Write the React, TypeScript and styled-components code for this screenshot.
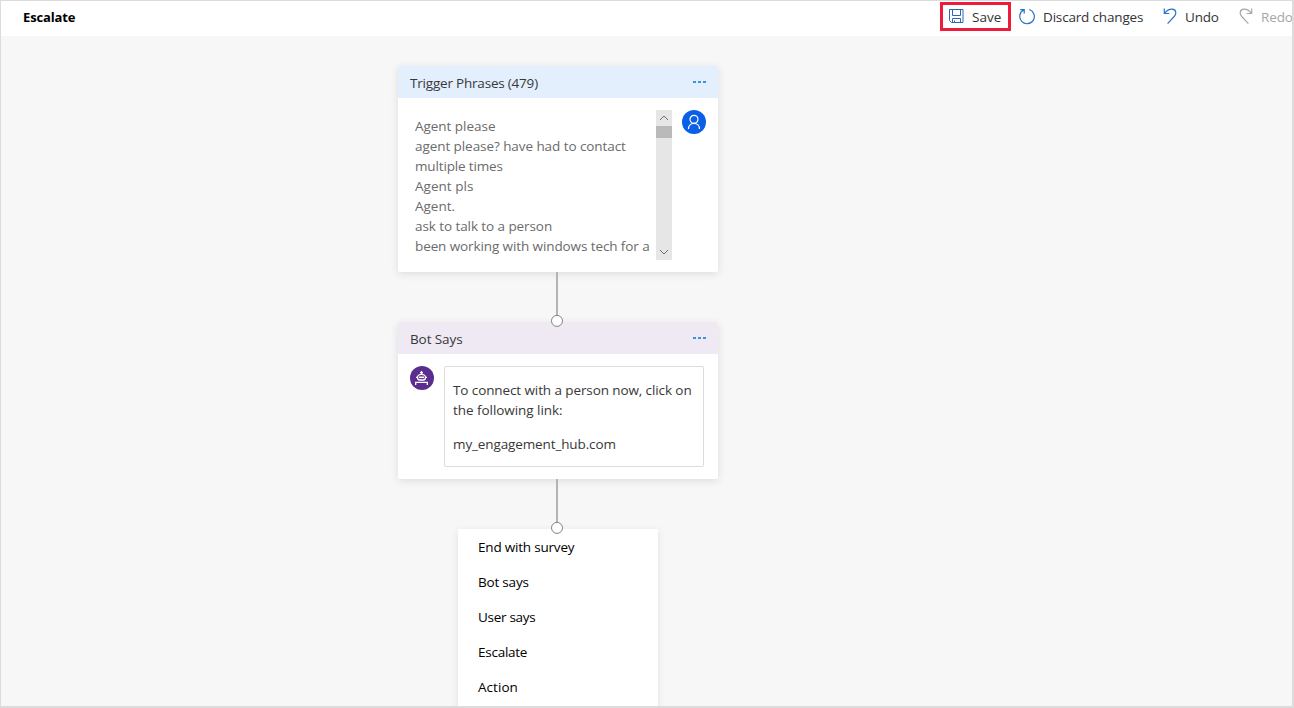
import React from "react";
import styled, { createGlobalStyle } from "styled-components";

const GlobalStyle = createGlobalStyle`
  * { box-sizing: border-box; }
  body { margin: 0; overflow: hidden; font-family: "Open Sans", "Noto Sans", sans-serif; font-size: 13.5px; }
  p, h1, h2, ul { margin: 0; padding: 0; font-weight: 400; font-size: inherit; }
`;

const Frame = styled.div`
  width: 1294px;
  height: 708px;
  display: flex;
  flex-direction: column;
  overflow: hidden;
  background: #f7f7f7;
  border: 1px solid #dcdcdc;
  border-right-width: 2px;
  border-bottom-width: 2px;
`;

const Toolbar = styled.header`
  flex: none;
  height: 35px;
  display: flex;
  align-items: flex-start;
  background: #fff;
  overflow: hidden;
`;

const Title = styled.h1<{ $spacing: number }>`
  && { font-weight: 700; font-size: 13px; }
  flex: none;
  line-height: 20px;
  width: 916px;
  padding: 6px 0 0 22px;
  color: #000;
  letter-spacing: ${(p) => p.$spacing}px;
`;

const Commands = styled.div`
  display: flex;
  flex: none;
  padding-top: 1px;
  margin-left: 23px;
`;

const Command = styled.button<{ $width: number; $highlight?: boolean; $disabled?: boolean; $pad: number; $gap: number; $spacing?: number }>`
  flex: none;
  width: ${(p) => p.$width}px;
  height: 29px;
  padding: 0 0 0 ${(p) => p.$pad}px;
  display: flex;
  align-items: center;
  gap: ${(p) => p.$gap}px;
  background: none;
  border: 3px solid ${(p) => (p.$highlight ? "#ee1c3a" : "transparent")};
  color: ${(p) => (p.$disabled ? "#a6a6a6" : "#333")};
  font: inherit;
  line-height: 20px;
  white-space: nowrap;
  letter-spacing: ${(p) => p.$spacing ?? 0}px;
  svg { flex: none; margin-top: ${(p) => (p.$highlight ? -2 : -1)}px; }
`;

const Flow = styled.main`
  flex: 1;
  min-height: 0;
  width: 320px;
  margin-left: 397px;
  padding-top: 30px;
  display: flex;
  flex-direction: column;
  align-items: center;
`;

const Card = styled.section`
  flex: none;
  width: 320px;
  background: #fff;
  border-radius: 2px;
  box-shadow: 0 2px 8px rgba(0, 0, 0, 0.11);
`;

const CardHeader = styled.div<{ $tint: string }>`
  height: 32px;
  padding: 0 12px;
  display: flex;
  align-items: center;
  justify-content: space-between;
  line-height: 20px;
  border-radius: 2px 2px 0 0;
  background: ${(p) => p.$tint};
  color: #383838;
  padding-top: 1px;
`;

const CardTitle = styled.h2<{ $spacing: number }>`
  letter-spacing: ${(p) => p.$spacing}px;
`;

const Dots = styled.span`
  display: flex;
  gap: 2px;
  margin-top: -1px;
  i { width: 3px; height: 2px; background: #3c93dc; }
`;

const TriggerBody = styled.div`
  height: 174px;
  padding: 12px 12px 12px 17px;
  display: flex;
`;

const Phrases = styled.ul`
  flex: none;
  width: 241px;
  padding-top: 6px;
  list-style: none;
  white-space: nowrap;
  color: #6b6b6b;
`;

const Line = styled.li<{ $spacing?: number }>`
  line-height: 20px;
  letter-spacing: ${(p) => p.$spacing ?? 0}px;
`;

const Scrollbar = styled.div`
  flex: none;
  width: 16px;
  height: 150px;
  display: flex;
  flex-direction: column;
  justify-content: space-between;
  background: #e6e6e6;
  margin-right: 10px;
  svg { display: block; }
`;

const Thumb = styled.div`
  height: 12px;
  background: #bababa;
`;

const Avatar = styled.div<{ $color: string }>`
  flex: none;
  width: 24px;
  height: 24px;
  border-radius: 50%;
  background: ${(p) => p.$color};
  svg { display: block; }
`;

const BotBody = styled.div`
  height: 125px;
  padding: 12px;
  display: flex;
  gap: 10px;
`;

const Message = styled.div`
  width: 260px;
  height: 101px;
  padding: 13px 0 0 8px;
  border: 1px solid #dcdcdc;
  border-radius: 2px;
  color: #383838;
  white-space: nowrap;
`;

const MessageLine = styled.p<{ $spacing?: number; $gap?: boolean }>`
  line-height: 20px;
  letter-spacing: ${(p) => p.$spacing ?? 0}px;
  && { margin-top: ${(p) => (p.$gap ? 14 : 0)}px; }
`;

const Connector = styled.div<{ $height: number }>`
  position: relative;
  flex: none;
  width: 2px;
  height: ${(p) => p.$height}px;
  margin-right: 2px;
  background: #b4b4b4;
  &::after {
    content: "";
    position: absolute;
    z-index: 1;
    left: -4px;
    bottom: -4px;
    width: 10px;
    height: 10px;
    border: 1px solid #858585;
    border-radius: 50%;
    background: #fff;
    transform: translate(-1px, 0.9px);
  }
`;

const Menu = styled.ul`
  flex: none;
  width: 200px;
  height: 200px;
  list-style: none;
  background: #fff;
  box-shadow: 0 2px 8px rgba(0, 0, 0, 0.09);
`;

const MenuItem = styled.li<{ $spacing?: number }>`
  height: 35px;
  line-height: 36px;
  padding-left: 20px;
  color: #000;
  letter-spacing: ${(p) => p.$spacing ?? 0}px;
`;

const SaveIcon = () => (
  <svg width="15" height="14" viewBox="0 0 15 14" fill="none" stroke="#2868b4">
    <path d="M.5.5h13.500v13H2.500l-2-2zM3.500.5v6h8v-6M3.500 13.500V9.500h8v4M5.500 11.500v2" />
  </svg>
);

const DiscardIcon = () => (
  <svg width="16" height="17" viewBox="0 0 16 17" fill="none" stroke="#2474c6" strokeWidth="1.2">
    <path d="M10.3 1.500A7.300 7.300 0 1 1 4.600 2M1.200 1.600h4v4" />
  </svg>
);

const UndoIcon = ({ color, flip }: { color: string; flip?: boolean }) => (
  <svg width="14" height="17" viewBox="0 0 14 17" fill="none" stroke={color} strokeWidth="1.2">
    <path transform={flip ? "translate(14 0) scale(-1 1)" : undefined} d="M1.3.5v5h5M1.5 5.3C4 2.2 6.3 1.2 8.8 1.2c2.4 0 4 1.7 4 3.8 0 1.4-.6 2.5-1.6 3.5L4.6 15.6" />
  </svg>
);

const Dotted = () => (
  <Dots><i /><i /><i /></Dots>
);

const phrases: [string, number][] = [
  ["Agent please", -0.03],
  ["agent please? have had to contact", -0.07],
  ["multiple times", -0.15],
  ["Agent pls", 0.03],
  ["Agent.", 0],
  ["ask to talk to a person", -0.08],
  ["been working with windows tech for a", -0.1],
];

const menuItems: [string, number][] = [
  ["End with survey", -0.2],
  ["Bot says", -0.2],
  ["User says", -0.3],
  ["Escalate", -0.25],
  ["Action", 0.05],
];

export default function App() {
  return (
    <>
      <GlobalStyle />
      <Frame>
        <Toolbar>
          <Title $spacing={-0.15}>Escalate</Title>
          <Commands>
            <Command $width={71} $pad={6} $gap={8} $highlight><SaveIcon />Save</Command>
            <Command $width={144} $pad={5} $gap={8} $spacing={-0.17}><DiscardIcon />Discard changes</Command>
            <Command $width={76} $pad={5} $gap={8} $spacing={-0.2}><UndoIcon color="#2474c6" />Undo</Command>
            <Command $width={76} $pad={5} $gap={8} $spacing={-0.1} $disabled><UndoIcon color="#a6a6a6" flip />Redo</Command>
          </Commands>
        </Toolbar>
        <Flow>
          <Card>
            <CardHeader $tint="#e3effd">
              <CardTitle $spacing={-0.2}>Trigger Phrases (479)</CardTitle>
              <Dotted />
            </CardHeader>
            <TriggerBody>
              <Phrases>
                {phrases.map(([text, spacing]) => <Line key={text} $spacing={spacing}>{text}</Line>)}
              </Phrases>
              <Scrollbar>
                <div>
                  <svg width="16" height="16" fill="none" stroke="#707070"><path d="M4 10l4-4 4 4" /></svg>
                  <Thumb />
                </div>
                <svg width="16" height="16" fill="none" stroke="#707070"><path d="M4 6l4 4 4-4" /></svg>
              </Scrollbar>
              <Avatar $color="#0a5fe6">
                <svg width="24" height="24" fill="none" stroke="#fff" strokeWidth="1.2">
                  <circle cx="12" cy="9.3" r="4" />
                  <path d="M6.500 19c0-3.500 2.400-5.700 5.500-5.700s5.500 2.200 5.500 5.700" />
                </svg>
              </Avatar>
            </TriggerBody>
          </Card>
          <Connector $height={50} />
          <Card>
            <CardHeader $tint="#efe9f4">
              <CardTitle $spacing={-0.1}>Bot Says</CardTitle>
              <Dotted />
            </CardHeader>
            <BotBody>
              <Avatar $color="#5c2d91">
                <svg width="24" height="24" fill="none" stroke="#fff" strokeWidth="1.3">
                  <path d="M11.500 5v3.500M10 6.700h3" />
                  <path d="M7.500 11.300a4 3 0 0 1 8 0c0 1.600-.8 2.700-2 2.700h-4c-1.200 0-2-1.100-2-2.700z" />
                  <path d="M9 11.300h5" strokeWidth="1.600" />
                  <path d="M6 11.300h1.500M15.500 11.300H17M5.700 19v-2.600h11.600V19" />
                </svg>
              </Avatar>
              <Message>
                <MessageLine $spacing={-0.1}>To connect with a person now, click on</MessageLine>
                <MessageLine $spacing={-0.05}>the following link:</MessageLine>
                <MessageLine $spacing={-0.12} $gap>my_engagement_hub.com</MessageLine>
              </Message>
            </BotBody>
          </Card>
          <Connector $height={50} />
          <Menu>
            {menuItems.map(([text, spacing]) => <MenuItem key={text} $spacing={spacing}>{text}</MenuItem>)}
          </Menu>
        </Flow>
      </Frame>
    </>
  );
}
